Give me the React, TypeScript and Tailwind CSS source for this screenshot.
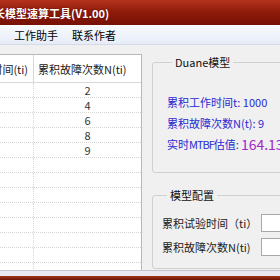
const rows = ["2", "4", "6", "8", "9", "", "", "", "", "", "", "", ""];

const font = { fontFamily: '"Noto Sans CJK SC", "Liberation Sans", sans-serif' };

export default function App() {
  return (
    <div
      className="w-[280px] h-[280px] overflow-hidden bg-[#f0f0f0] flex flex-col text-[11px] leading-[14px]"
      style={font}
    >
      {/* title bar */}
      <div className="h-[25px] shrink-0 flex items-center bg-gradient-to-b from-[#b4321c] via-[#8e1a0a] to-[#761106]">
        <span className="-ml-[6px] text-white font-bold whitespace-nowrap [text-shadow:0_0_2px_#5a0a00]">
          长模型速算工具(V1.00)
        </span>
      </div>

      {/* menu */}
      <div className="h-[20px] shrink-0 flex items-center gap-[14px] pl-[14px] bg-gradient-to-b from-[#f8fafe] to-[#e6ecf7] border-b border-[#d5dbe6] text-black">
        <span>工作助手</span>
        <span>联系作者</span>
      </div>

      <div className="h-[9px] shrink-0" />

      <div className="flex flex-1 min-h-0">
        {/* table */}
        <div className="w-[142px] shrink-0 bg-white border-t border-r border-[#b8b8b8] flex flex-col overflow-hidden">
          <div className="h-[28px] shrink-0 flex border-b border-[#d8d8d8] text-[#222]">
            <div className="w-[34px] shrink-0 overflow-hidden flex items-center justify-end pr-[5px] border-r border-[#d8d8d8]">
              <span className="whitespace-nowrap">累积试验时间(ti)</span>
            </div>
            <div className="flex-1 flex items-center pl-[4px] whitespace-nowrap">累积故障次数N(ti)</div>
          </div>
          {rows.map((v, i) => (
            <div key={i} className="h-[15px] shrink-0 flex border-b border-dotted border-[#d6d6d6] text-[#333]">
              <div className="w-[34px] shrink-0 border-r border-dotted border-[#d6d6d6]" />
              <div className="flex-1 flex items-center justify-center">{v}</div>
            </div>
          ))}
        </div>

        {/* right side */}
        <div className="flex-1 min-w-0 pl-[10px] pt-[1px] flex flex-col">
          <fieldset className="w-[150px] h-[118px] shrink-0 border border-[#d0d0d0] rounded-[3px] pl-[14px] pt-[26px]">
            <legend className="ml-[5px] px-[3px] text-[#111]">Duane模型</legend>
            <div className="flex flex-col gap-[7px] text-[#2a2ad2] whitespace-nowrap">
              <div>累积工作时间t: 1000</div>
              <div>累积故障次数N(t): 9</div>
              <div className="flex items-center">
                实时<span className="tracking-[-1px]">MTBF</span>估值:
                <span className="ml-[2px] text-[14px] text-[#a426c9]">164.13</span>
              </div>
            </div>
          </fieldset>

          <fieldset className="mt-[15px] w-[150px] h-[81px] shrink-0 border border-[#d0d0d0] rounded-[3px] pl-[9px] pt-[12px]">
            <legend className="ml-[5px] px-[3px] text-[#111]">模型配置</legend>
            <div className="flex flex-col gap-[6px] text-[#222] whitespace-nowrap">
              <div className="flex items-center h-[18px]">
                <span className="w-[99px] shrink-0">累积试验时间（ti）</span>
                <div className="w-[40px] h-[18px] bg-white border border-[#a8a8a8]" />
              </div>
              <div className="flex items-center h-[18px]">
                <span className="w-[99px] shrink-0">累积故障次数N(ti)</span>
                <div className="w-[40px] h-[18px] bg-white border border-[#a8a8a8]" />
              </div>
            </div>
          </fieldset>
        </div>
      </div>

      {/* status / bottom */}
      <div className="h-[6px] shrink-0 border-t border-[#c4c4cc] bg-[#e8e8ee]" />
      <div className="h-[4px] shrink-0 bg-gradient-to-b from-[#a33418] to-[#6e1206]" />
    </div>
  );
}
